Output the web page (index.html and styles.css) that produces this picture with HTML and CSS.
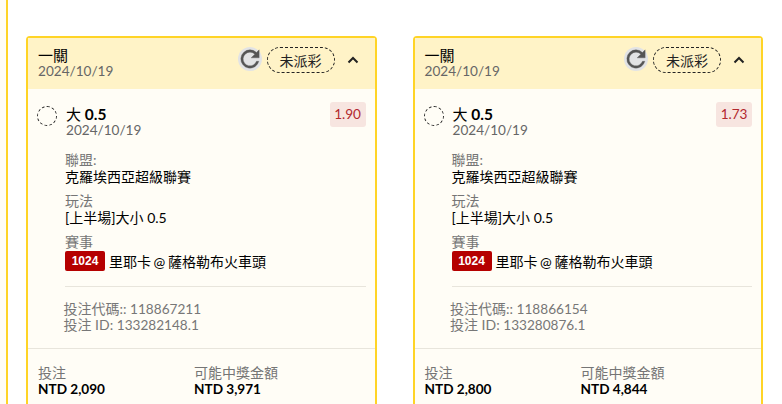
FILE: index.html
```html
<!DOCTYPE html>
<html lang="zh-Hant">
<head>
  <meta charset="UTF-8">
  <meta name="viewport" content="width=device-width, initial-scale=1.0">
  <title>投注記錄</title>
  <link rel="stylesheet" href="styles.css">
</head>
<body>
  <div class="page">
    <div class="card">
      <div class="card-head">
        <div class="head-title">
          <div class="title">一關</div>
          <div class="date">2024/10/19</div>
        </div>
        <div class="head-actions">
          <span class="refresh">
            <svg viewBox="1.5 1.5 21 21" width="24" height="24"><path d="M17.65 6.35A7.96 7.96 0 0 0 12 4a8 8 0 1 0 7.73 10h-2.08A6 6 0 1 1 12 6c1.66 0 3.14.69 4.22 1.78L13 11h7V4l-2.35 2.35z"/></svg>
          </span>
          <span class="status">未派彩</span>
          <svg class="chevron" viewBox="0 0 12 8" width="12" height="8"><path d="M1.5 6.5 6 2l4.5 4.5"/></svg>
        </div>
      </div>
      <div class="bet">
        <div class="bet-top">
          <span class="circle"></span>
          <div class="bet-name">
            <div class="pick">大 <b>0.5</b></div>
            <div class="date">2024/10/19</div>
          </div>
          <span class="odds">1.90</span>
        </div>
        <div class="info">
          <div class="label">聯盟:</div>
          <div class="value">克羅埃西亞超級聯賽</div>
          <div class="label">玩法</div>
          <div class="value">[上半場]大小 0.5</div>
          <div class="label">賽事</div>
          <div class="match"><span class="code">1024</span>里耶卡 @ 薩格勒布火車頭</div>
        </div>
        <div class="ids">
          <div>投注代碼:: <span class="num">118867211</span></div>
          <div>投注 ID: <span class="num">133282148.1</span></div>
        </div>
      </div>
      <div class="totals">
        <div class="total">
          <div class="label">投注</div>
          <div class="amount">NTD 2,090</div>
        </div>
        <div class="total">
          <div class="label">可能中獎金額</div>
          <div class="amount">NTD 3,971</div>
        </div>
      </div>
    </div>

    <div class="card">
      <div class="card-head">
        <div class="head-title">
          <div class="title">一關</div>
          <div class="date">2024/10/19</div>
        </div>
        <div class="head-actions">
          <span class="refresh">
            <svg viewBox="1.5 1.5 21 21" width="24" height="24"><path d="M17.65 6.35A7.96 7.96 0 0 0 12 4a8 8 0 1 0 7.73 10h-2.08A6 6 0 1 1 12 6c1.66 0 3.14.69 4.22 1.78L13 11h7V4l-2.35 2.35z"/></svg>
          </span>
          <span class="status">未派彩</span>
          <svg class="chevron" viewBox="0 0 12 8" width="12" height="8"><path d="M1.5 6.5 6 2l4.5 4.5"/></svg>
        </div>
      </div>
      <div class="bet">
        <div class="bet-top">
          <span class="circle"></span>
          <div class="bet-name">
            <div class="pick">大 <b>0.5</b></div>
            <div class="date">2024/10/19</div>
          </div>
          <span class="odds">1.73</span>
        </div>
        <div class="info">
          <div class="label">聯盟:</div>
          <div class="value">克羅埃西亞超級聯賽</div>
          <div class="label">玩法</div>
          <div class="value">[上半場]大小 0.5</div>
          <div class="label">賽事</div>
          <div class="match"><span class="code">1024</span>里耶卡 @ 薩格勒布火車頭</div>
        </div>
        <div class="ids">
          <div>投注代碼:: <span class="num">118866154</span></div>
          <div>投注 ID: <span class="num">133280876.1</span></div>
        </div>
      </div>
      <div class="totals">
        <div class="total">
          <div class="label">投注</div>
          <div class="amount">NTD 2,800</div>
        </div>
        <div class="total">
          <div class="label">可能中獎金額</div>
          <div class="amount">NTD 4,844</div>
        </div>
      </div>
    </div>
  </div>
</body>
</html>
```

FILE: styles.css
```css
html, body {
  margin: 0;
  height: 404px;
  overflow: hidden;
}

body {
  font-family: Lato, "Noto Sans CJK TC", sans-serif;
  font-size: 14px;
  color: #000;
  background: #fffdf6;
}

.page {
  display: flex;
  gap: 36px;
  height: 404px;
  overflow: hidden;
  box-sizing: border-box;
  margin-left: 6px;
  padding: 36px 0 0 18px;
  border-left: 2px solid #ffd426;
  background: #fff;
}

.card {
  width: 350.5px;
  height: 420px;
  flex: none;
  box-sizing: border-box;
  border: 2px solid #ffd426;
  border-radius: 4px;
  background: #fffdf6;
}

.card-head {
  display: flex;
  justify-content: space-between;
  align-items: flex-start;
  height: 51px;
  box-sizing: border-box;
  padding: 8px 10px 0 10px;
  background: #fff3c7;
}

.title {
  font-size: 15px;
  line-height: 18px;
}

.date {
  font-size: 13.6px;
  line-height: 15px;
  color: #666;
}

.head-actions {
  display: flex;
  align-items: flex-start;
  margin-top: 1px;
}

.refresh {
  display: flex;
  align-items: center;
  justify-content: center;
  width: 24px;
  height: 24px;
  border-radius: 50%;
  background: #e2e3e5;
}

.refresh path {
  fill: #555;
  stroke: #555;
  stroke-width: 0.3;
}

.status {
  width: 66px;
  height: 24px;
  margin-left: 5px;
  border: 1px dashed #222;
  border-radius: 13px;
  text-align: center;
  font-size: 14px;
  line-height: 26px;
  color: #222;
}

.chevron {
  margin: 9px 6px 0 12px;
}

.chevron path {
  fill: none;
  stroke: #222;
  stroke-width: 2;
}

.bet {
  padding: 13px 9px 15.5px 10px;
  border-bottom: 1px solid #e8e5dc;
}

.bet-top {
  display: flex;
  align-items: flex-start;
}

.circle {
  width: 18px;
  height: 18px;
  margin: 4px 9px 0 -1px;
  border: 1px dashed #222;
  border-radius: 50%;
}

.bet-name {
  flex: 1;
  padding-top: 3px;
}

.pick {
  font-size: 15px;
  line-height: 18px;
}

.pick b {
  font-size: 15.5px;
  font-weight: 700;
}

.bet-name .date {
  line-height: 14px;
}

.odds {
  height: 25px;
  padding: 0 4.5px;
  border-radius: 3px;
  background: #f7e5e0;
  font-size: 13.6px;
  line-height: 25px;
  color: #b2282e;
}

.info {
  margin: 15px 0 0 27px;
  padding-bottom: 15px;
  border-bottom: 1px solid #e8e5dc;
}

.label {
  font-size: 14px;
  line-height: 16px;
  color: #757575;
}

.value {
  font-size: 14px;
  line-height: 18px;
  margin-bottom: 7px;
}

.match {
  display: flex;
  align-items: center;
  font-size: 14px;
  word-spacing: -1px;
  margin-top: 1px;
}

.code {
  width: 40px;
  height: 20px;
  margin-right: 4px;
  border-radius: 2px;
  background: #b50000;
  text-align: center;
  font-family: "Liberation Sans", sans-serif;
  font-size: 12px;
  font-weight: 700;
  line-height: 20px;
  color: #fff;
}

.ids {
  margin: 13.5px 0 0 25.5px;
  font-size: 14px;
  line-height: 15px;
  color: #777;
}

.num {
  font-size: 13.6px;
}

.totals {
  display: flex;
  padding: 16px 10px;
}

.total {
  width: 156px;
}

.amount {
  font-size: 13.6px;
  font-weight: 700;
  line-height: 16px;
}
```
